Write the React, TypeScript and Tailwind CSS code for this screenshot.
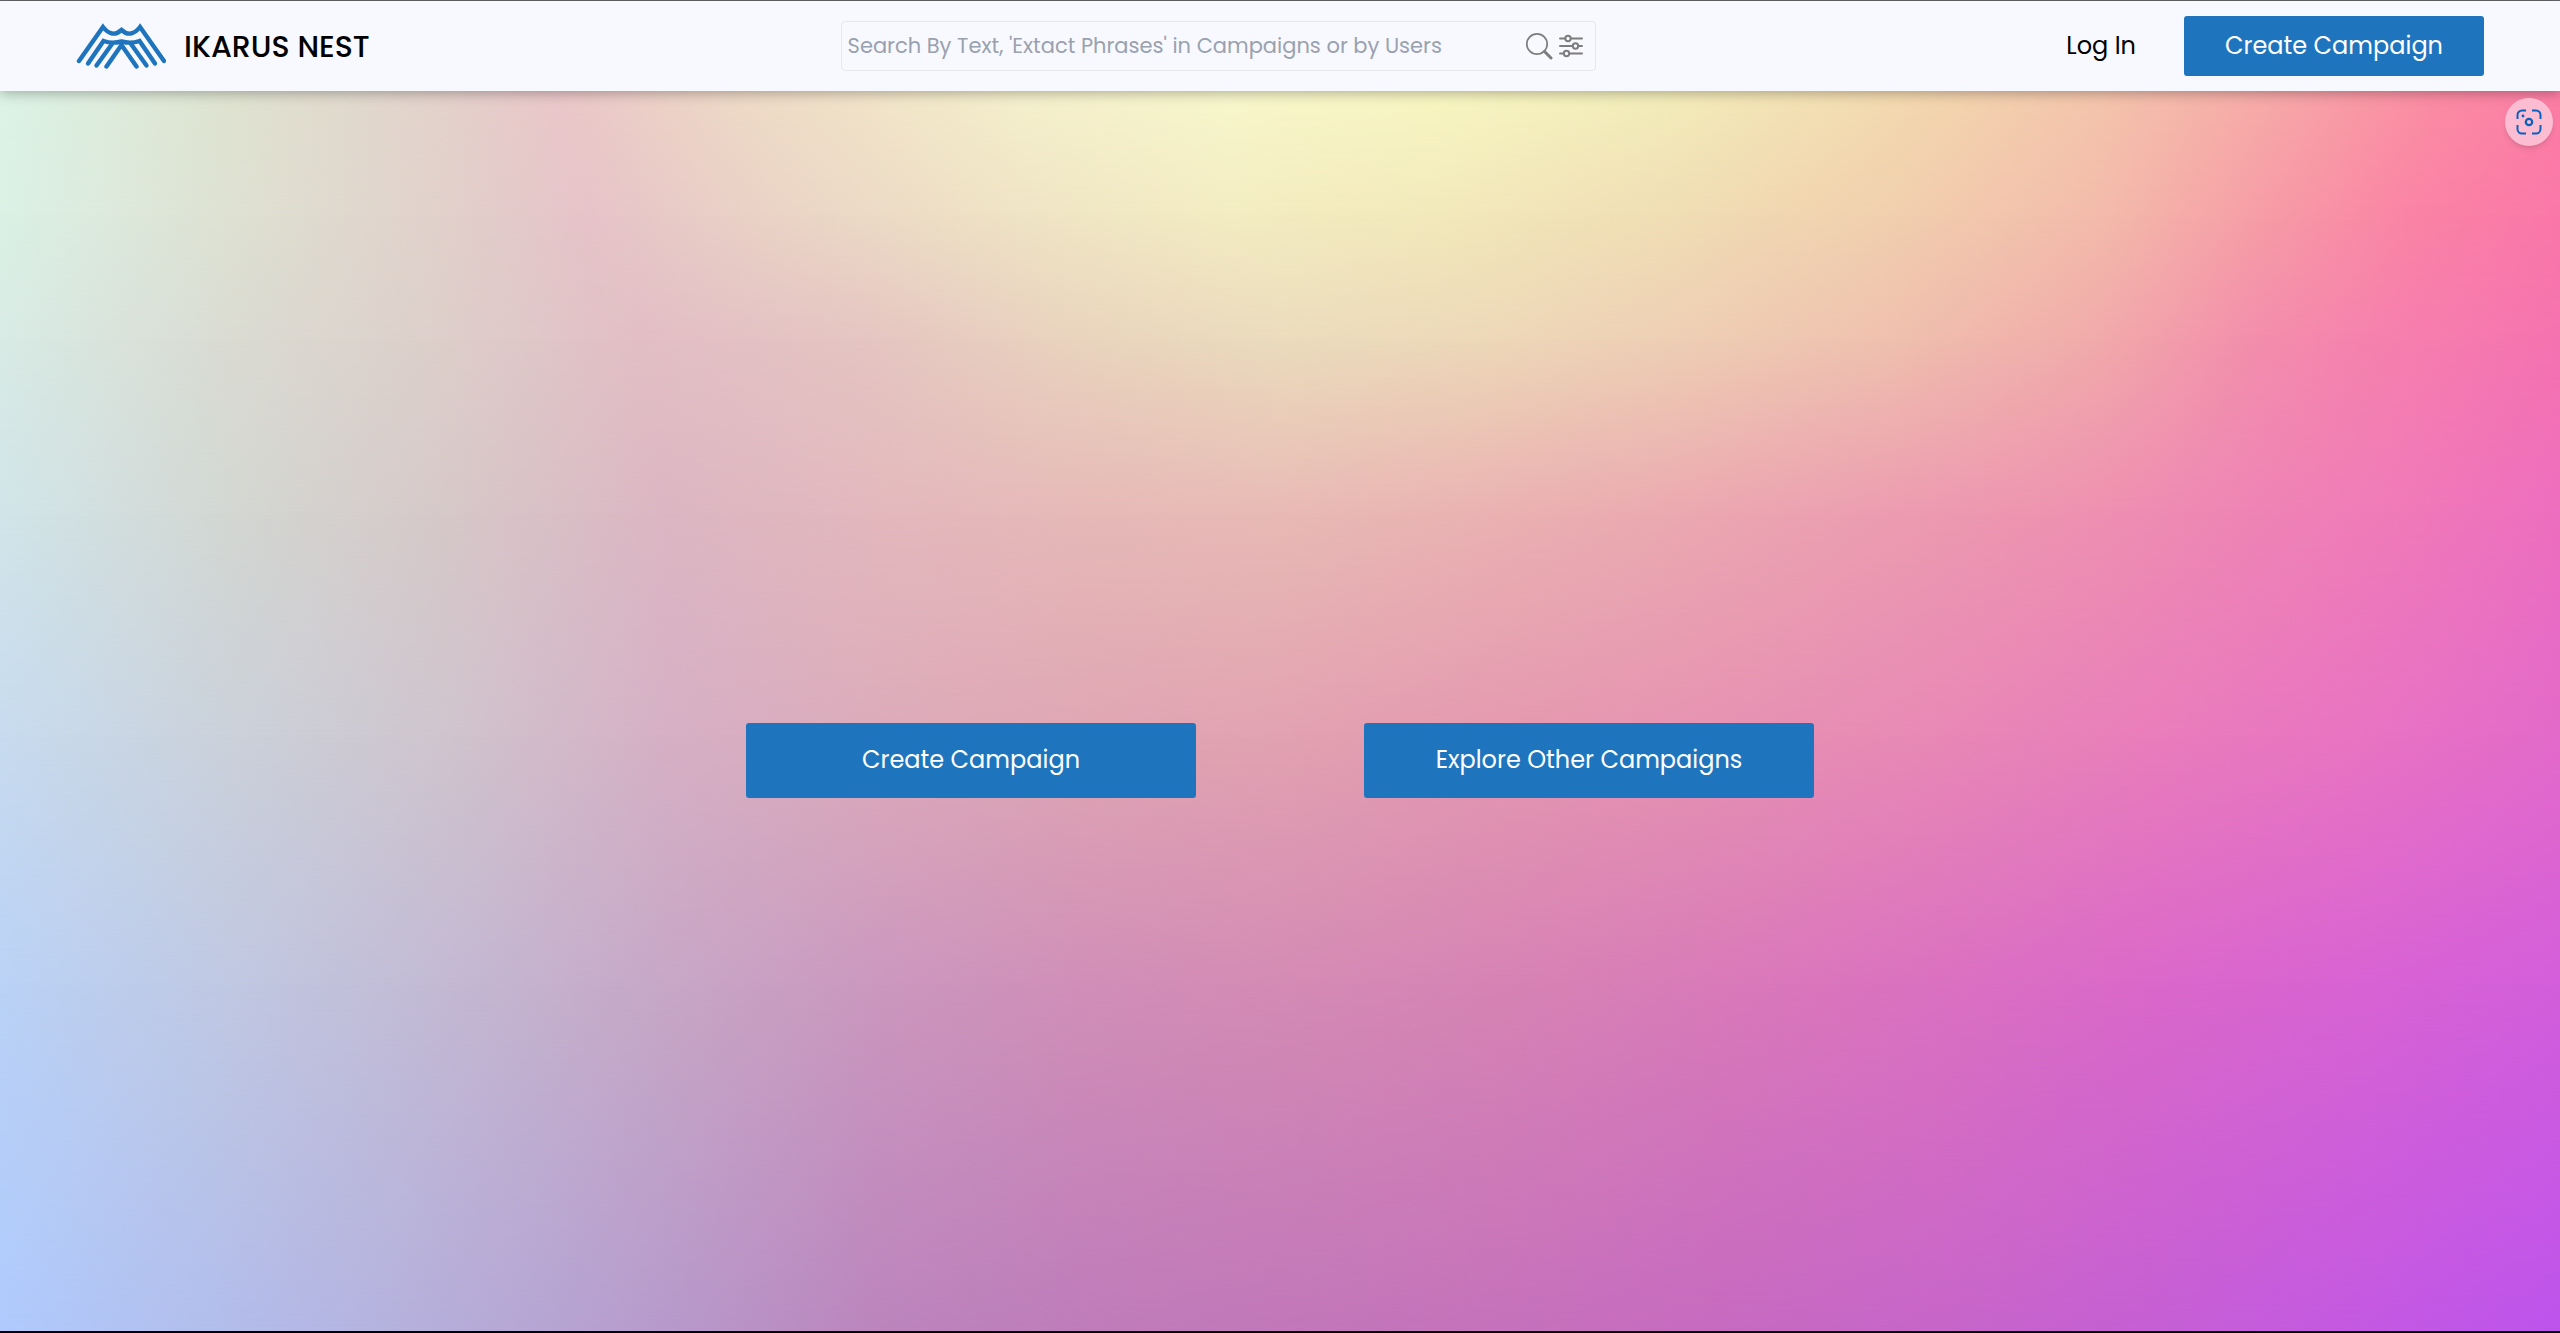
import React from "react";

function Logo() {
  return (
    <svg viewBox="0 0 90 46" className="h-[46px] w-[90px]" fill="none" stroke="#1e75bd" strokeWidth="4.4" strokeLinecap="round" aria-hidden="true">
      <path d="M3 38 27 4Q36 15.500 45.500 7Q55 15.500 64 4L88 38" />
      <path d="M12 40.500 27.500 18Q36 21 45.500 18.500Q55 21 63.500 18L79 40.500" />
      <path d="M20.500 42.500 36 21" />
      <path d="M70.500 42.500 55 21" />
      <path d="M30.500 43.500 45.500 22 60.500 43.500" />
    </svg>
  );
}

function SearchIcon() {
  return (
    <svg viewBox="0 0 28 28" className="size-7" fill="none" stroke="#7d7d7d" aria-hidden="true">
      <circle cx="12" cy="12" r="10.200" strokeWidth="1.700" />
      <path d="M19.500 19.500 26 26" strokeWidth="3" strokeLinecap="round" />
    </svg>
  );
}

function FilterIcon() {
  return (
    <svg viewBox="0 0 24 24" className="size-6" fill="none" stroke="#7d7d7d" strokeWidth="2" strokeLinecap="round" aria-hidden="true">
      <path d="M1 4.500h5M12 4.500h11M1 12h12M19 12h4M1 19.500h4M11 19.500h12" />
      <circle cx="9" cy="4.500" r="2.700" />
      <circle cx="16.500" cy="12" r="2.700" />
      <circle cx="7.500" cy="19.500" r="2.700" />
    </svg>
  );
}

function CaptureIcon() {
  return (
    <svg viewBox="0 0 26 26" className="size-[26px]" fill="none" stroke="#0a60bd" strokeWidth="2" aria-hidden="true">
      <path d="M1.500 10V6a4.500 4.500 0 0 1 4.500-4.500h4M16 1.500h4A4.500 4.500 0 0 1 24.500 6v4M24.500 16v4a4.500 4.500 0 0 1-4.500 4.500h-4M10 24.500H6A4.500 4.500 0 0 1 1.500 20v-4" />
      <circle cx="13" cy="13" r="3.200" strokeWidth="2.200" />
      <circle cx="7" cy="7" r="1.400" fill="#0a60bd" stroke="none" />
    </svg>
  );
}

/* Horizontal colour bands that fade into each other from top to bottom. */
function MeshBackground() {
  return (
    <div className="col-start-1 row-start-1 grid *:col-start-1 *:row-start-1" aria-hidden="true">
      <div className="bg-[linear-gradient(to_right,#dcf4e6_0%,#dfe3d0_9%,#e3d2cb_17%,#ebc7c9_22%,#eedac6_29%,#f5f0cc_40%,#f8f7cc_48%,#f8f6c2_56%,#f3edba_65%,#f3dab0_74%,#f4c5ac_82%,#f7a8a8_89%,#fb8ca3_95%,#fc7ea5_100%)]" />
      <div className="bg-[linear-gradient(to_right,#dbf1e5_0%,#dee1d2_9%,#e1d1cb_17%,#e6c3c8_23%,#ead3c6_30%,#efe4c5_40%,#f3ecc2_48%,#f2e9bb_56%,#f0deb5_65%,#f1cfae_74%,#f3bbab_82%,#f69ea6_88%,#fa84a5_94%,#fa77a8_100%)] [mask-image:linear-gradient(to_bottom,transparent_0%,black_10%)]" />
      <div className="bg-[linear-gradient(to_right,#d8ebe5_0%,#dadbd2_9%,#ddcfca_17%,#e2bec5_25%,#e5c5c2_34%,#e9d2be_41%,#ebdcbd_50%,#edd8b8_58%,#eeceb4_66%,#efc0ae_74%,#f1aaaa_82%,#f38eac_88%,#f67eae_94%,#f573b0_100%)] [mask-image:linear-gradient(to_bottom,transparent_10%,black_20%)]" />
      <div className="bg-[linear-gradient(to_right,#d1e5e9_0%,#d3d7d2_9%,#d6c9c9_17%,#dcb6c3_26%,#e3b8bd_34%,#e6b9b8_42%,#e8bab5_50%,#eab2b2_58%,#eba8b0_66%,#ec9cb0_74%,#ee90b1_82%,#ee84b5_88%,#f079b9_94%,#ed6ebf_100%)] [mask-image:linear-gradient(to_bottom,transparent_20%,black_34%)]" />
      <div className="bg-[linear-gradient(to_right,#c7dbef_0%,#cbd1da_9%,#cfc5ce_17%,#d6b0c5_26%,#dcabbb_34%,#dfa6b3_42%,#e2a2b1_50%,#e499b0_58%,#e692b2_67%,#e888b6_76%,#e97dbb_84%,#e874c2_92%,#e36aca_100%)] [mask-image:linear-gradient(to_bottom,transparent_34%,black_52%)]" />
      <div className="bg-[linear-gradient(to_right,#bad2f6_0%,#c0c8e2_9%,#c3bad4_17%,#c7a7c6_26%,#cb98bf_34%,#d08fb8_42%,#d48bb4_50%,#d684b4_58%,#d97ab9_67%,#db70c1_76%,#da68ca_84%,#d863d3_92%,#d35edb_100%)] [mask-image:linear-gradient(to_bottom,transparent_52%,black_72%)]" />
      <div className="bg-[linear-gradient(to_right,#afcafd_0%,#b2bcea_9%,#b5b0dc_16%,#b69ccd_25%,#bb85bd_34%,#be7cba_42%,#c177b9_50%,#c572bb_58%,#c66ac0_67%,#c765c9_76%,#c55fd4_84%,#c359e1_92%,#bd54ec_100%)] [mask-image:linear-gradient(to_bottom,transparent_72%,black_100%)]" />
    </div>
  );
}

export default function App() {
  return (
    <div className="flex min-h-screen flex-col border-t border-b-2 border-t-[#68686c] border-b-black font-['Poppins','Inter',sans-serif] text-black">
      <header className="relative z-10 flex items-center justify-between bg-[#f8f9fe] px-[76px] py-[15px] shadow-[0_2px_12px_rgba(0,0,0,0.3)]">
        <a href="#" className="flex items-center gap-[18px]">
          <Logo />
          <span className="text-[30px] leading-[45px] font-medium">IKARUS NEST</span>
        </a>
        <form className="flex h-[50px] w-[755px] items-center rounded-sm border border-gray-200 pr-3" onSubmit={(e) => e.preventDefault()}>
          <input
            type="text"
            aria-label="Search campaigns"
            placeholder="Search By Text, 'Extact Phrases' in Campaigns or by Users"
            className="min-w-0 flex-1 bg-transparent pl-1.5 text-[21px] outline-none placeholder:text-gray-400"
          />
          <button type="submit" aria-label="Search" className="mr-1.5">
            <SearchIcon />
          </button>
          <button type="button" aria-label="Filters">
            <FilterIcon />
          </button>
        </form>
        <nav className="flex items-center gap-12">
          <a href="#login" className="text-2xl">Log In</a>
          <button type="button" className="h-[60px] w-[300px] rounded-[3px] bg-[#1e75bd] text-2xl text-white">Create Campaign</button>
        </nav>
      </header>
      <main className="grid flex-1">
        <MeshBackground />
        <div className="z-10 col-start-1 row-start-1 flex items-center justify-center gap-[168px] pt-[98px]">
          <button type="button" className="h-[75px] w-[450px] rounded-[3px] bg-[#1e75bd] text-2xl text-white">Create Campaign</button>
          <button type="button" className="h-[75px] w-[450px] rounded-[3px] bg-[#1e75bd] text-2xl text-white">Explore Other Campaigns</button>
        </div>
      </main>
      <button type="button" aria-label="Visual search" className="fixed top-[98px] right-[7px] z-20 flex size-12 items-center justify-center rounded-full bg-[#fcbdd3] shadow-md">
        <CaptureIcon />
      </button>
    </div>
  );
}
